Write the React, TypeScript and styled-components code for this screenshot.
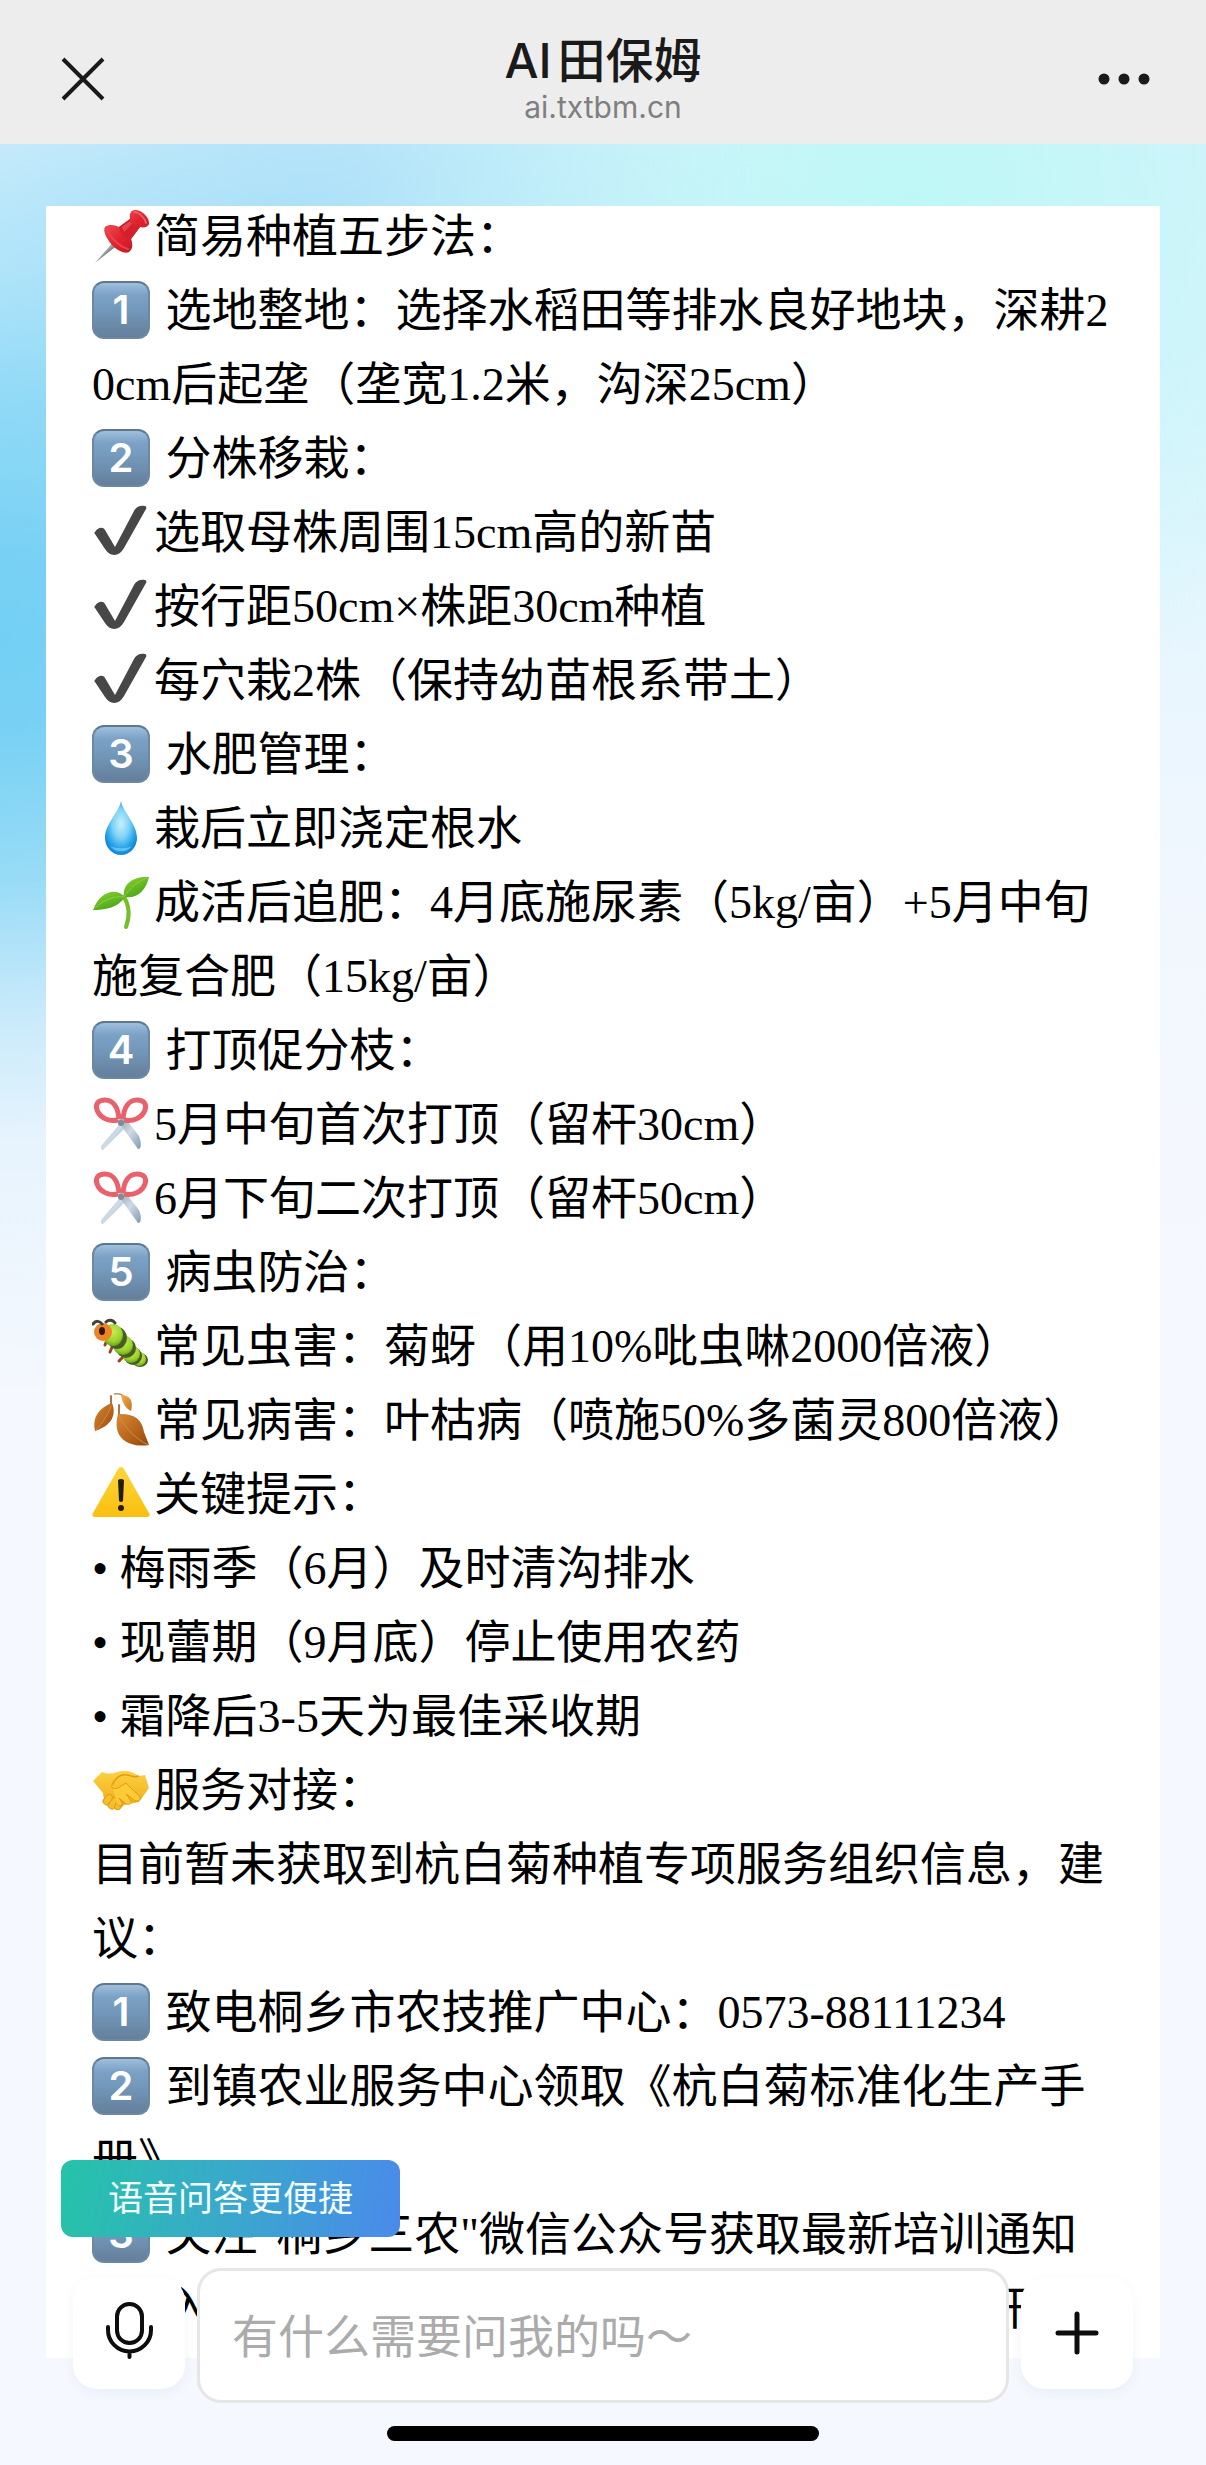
import React from "react";
import styled, { createGlobalStyle } from "styled-components";

const serif = '"Liberation Serif", "Noto Sans CJK SC", serif';
const sans = 'Inter, "Noto Sans CJK SC", sans-serif';

const GlobalStyle = createGlobalStyle`
  *, *::before, *::after { box-sizing: border-box; }
  body { margin: 0; background: #f5f8fe; }
  button { font: inherit; color: inherit; border: 0; padding: 0; cursor: pointer; }
`;

const Page = styled.div`
  display: flex;
  flex-direction: column;
  height: 100vh;
  overflow: hidden;
  color: #000;
  font-family: ${sans};
  background:
    radial-gradient(
      ellipse 1000px 760px at 0 640px,
      rgb(115 208 244) 0,
      rgb(117 208 244 / 0.97) 12%,
      rgb(117 208 244 / 0.72) 31%,
      rgb(117 208 244 / 0.34) 49%,
      rgb(117 208 244 / 0.1) 66%,
      rgb(117 208 244 / 0) 100%
    ),
    radial-gradient(ellipse 560px 520px at 910px 200px, rgb(190 248 246) 0, rgb(190 248 246 / 0) 100%),
    radial-gradient(ellipse 420px 360px at 310px 230px, rgb(178 226 248) 0, rgb(178 226 248 / 0) 100%),
    linear-gradient(180deg, #d6effd 0, #dcf4fd 420px, #eaf6fe 700px, #f2f7fe 920px, #f5f8fe 1300px);
`;

const Header = styled.header`
  display: grid;
  grid-template-columns: 1fr auto 1fr;
  align-items: center;
  flex: none;
  height: 144px;
  padding: 14px 56px 0;
  background: #ededed;
  color: #1a1a1a;
`;

const HeaderButton = styled.button<{ $end?: boolean }>`
  display: flex;
  justify-self: ${(p) => (p.$end ? "end" : "start")};
  background: none;
`;

const Heading = styled.div`
  text-align: center;
`;

const Title = styled.h1`
  margin: 0;
  font-size: 48px;
  font-weight: 500;
  line-height: 56px;
  text-autospace: normal;
`;

const Address = styled.p`
  margin: 0;
  font-size: 30px;
  line-height: 36px;
  color: #7f7f7f;
`;

const Main = styled.main`
  display: flex;
  flex: 1;
  min-height: 0;
  padding: 62px 46px 107px;
`;

const Card = styled.article`
  flex: 1;
  overflow: hidden;
  padding: 0 46px;
  background: #fff;
`;

const Answer = styled.div`
  margin-block: -6px;
  font-family: ${serif};
  font-size: 46px;
  line-height: 74px;
  word-break: break-all;
  text-spacing-trim: space-all;
  text-autospace: no-autospace;
`;

const Line = styled.p`
  margin: 0;
`;

const Keycap = styled.span`
  display: inline-block;
  overflow: hidden;
  width: 58px;
  height: 58px;
  margin: 0 4px 0 0;
  vertical-align: -13px;
  border: 2px solid #6d88a3;
  border-top-color: #5c7891;
  border-radius: 12px;
  background: linear-gradient(180deg, #9fbfdc 0, #7ba2c6 22%, #7398ba 50%, #647f9b 100%);
  color: #fff;
  font-family: ${sans};
  font-size: 40px;
  font-weight: 600;
  line-height: 54px;
  text-align: center;
`;

const Glyph = styled.svg`
  width: 58px;
  height: 58px;
  margin-right: 4px;
  vertical-align: -13px;
`;

const Tip = styled.div`
  align-self: flex-start;
  padding: 0 47px;
  border-radius: 12px;
  background: linear-gradient(100deg, #25c3a8 0, #38abc9 45%, #4a8aeb 100%);
  color: #f2feff;
  font-size: 35px;
  line-height: 77px;
`;

const Dock = styled.footer`
  position: fixed;
  inset: auto 0 0;
  display: flex;
  flex-direction: column;
  padding: 0 61px 24px;
`;

const Composer = styled.form`
  display: flex;
  align-items: center;
  gap: 12px;
  margin: 31px 12px 23px;
`;

const RoundButton = styled.button`
  display: grid;
  flex: none;
  place-items: center;
  width: 112px;
  height: 112px;
  margin-bottom: 6px;
  border-radius: 24px;
  background: #fff;
  box-shadow: 0 4px 12px rgb(60 80 140 / 0.06);
`;

const Field = styled.input`
  flex: 1;
  min-width: 0;
  height: 135px;
  padding: 0 32px;
  border: 3px solid #e6e6e6;
  border-radius: 24px;
  outline: 0;
  background: #fff;
  font-family: ${sans};
  font-size: 46px;
  color: #000;

  &::placeholder {
    color: #ababab;
    opacity: 1;
  }
`;

const HomeBar = styled.div`
  align-self: center;
  width: 432px;
  height: 15px;
  border-radius: 8px;
  background: #000;
`;

type Kind =
  | "pin" | "check" | "drop" | "sprout" | "scissors"
  | "bug" | "leaf" | "warning" | "handshake";

const drawings: Record<Kind, { label: string; art: React.ReactNode }> = {
  pin: {
    label: "图钉",
    art: (
      <>
        <defs>
          <linearGradient id="needle" x1="0" y1="0" x2="1" y2="1">
            <stop offset="0.35" stopColor="#c9d0d4" />
            <stop offset="0.6" stopColor="#6b7378" />
          </linearGradient>
          <linearGradient id="pinRed" x1="0" y1="0" x2="1" y2="1">
            <stop offset="0" stopColor="#f4616a" />
            <stop offset="0.5" stopColor="#e0242f" />
            <stop offset="1" stopColor="#b3121f" />
          </linearGradient>
        </defs>
        <path d="M23 33 27 37 3 56Z" fill="url(#needle)" />
        <path d="M13 20c4-3 10-2 14 0l11-8c-1-5 1-9 5-9 7 0 15 8 14 14-1 3-5 4-9 3l-9 12c2 5 2 10-2 13-4 2-11-1-16-6S10 24 13 20Z" fill="url(#pinRed)" />
        <path d="M27 20 38 12c1 5 5 8 10 8l-9 12c-6-1-11-6-12-12Z" fill="#d41f2c" />
        <path d="M30 20 38 14 40 17 32 25Z" fill="#ee5660" opacity=".7" />
        <path d="M42 5c5 0 11 6 12 11" fill="none" stroke="#f05c66" strokeWidth="2" strokeLinecap="round" />
        <path d="M15 22c2 7 11 17 21 20" fill="none" stroke="#ec434e" strokeWidth="2" strokeLinecap="round" />
      </>
    ),
  },
  check: {
    label: "对勾",
    art: <path d="M3 29c2-4 8-6 10-2l10 17L42 8c2-4 6-6 11-5 1 0 2 2 1 3L32 45c-5 9-14 9-19 1L3 31c-1-1-1-1 0-2Z" fill="#474747" />,
  },
  drop: {
    label: "水滴",
    art: (
      <>
        <defs>
          <radialGradient id="water" cx="0.5" cy="0.42" r="0.58">
            <stop offset="0" stopColor="#c9f0fc" />
            <stop offset="0.45" stopColor="#7ed3f6" />
            <stop offset="0.8" stopColor="#27a3ea" />
            <stop offset="1" stopColor="#1786d4" />
          </radialGradient>
        </defs>
        <path d="M29 2C31 13 45 25 45 39a16 17 0 0 1-32 0C13 25 27 13 29 2Z" fill="url(#water)" />
        <path d="M18 47c5 7 17 7 22 0-5 3-17 3-22 0Z" fill="#7fe0fb" opacity=".6" />
      </>
    ),
  },
  sprout: {
    label: "幼苗",
    art: (
      <>
        <defs>
          <linearGradient id="leafGreen" x1="0" y1="0" x2="0.6" y2="1">
            <stop offset="0" stopColor="#8bd435" />
            <stop offset="1" stopColor="#4aa317" />
          </linearGradient>
        </defs>
        <path d="M32 24c5 8 6 19 2 30" fill="none" stroke="#76bd2c" strokeWidth="4" strokeLinecap="round" />
        <path d="M33 24C24 14 8 18 1 37c11 0 25-2 32-13Z" fill="url(#leafGreen)" />
        <path d="M32 24C30 11 41 3 57 4 54 17 46 26 32 24Z" fill="url(#leafGreen)" />
        <path d="M3 35C13 26 22 23 32 24 38 15 46 8 55 5" fill="none" stroke="#8fcf3f" strokeWidth="1" />
      </>
    ),
  },
  scissors: {
    label: "剪刀",
    art: (
      <>
        <defs>
          <linearGradient id="blade" x1="0" y1="0" x2="1" y2="1">
            <stop offset="0" stopColor="#8e9daa" />
            <stop offset="0.5" stopColor="#cfdce8" />
            <stop offset="1" stopColor="#8199b0" />
          </linearGradient>
        </defs>
        <path d="M32 24 10 50c-2 3-1 5 1 5L35 31Z" fill="url(#blade)" />
        <path d="M25 25 46 54c3 1 4-6 1-13L33 23Z" fill="url(#blade)" />
        <g fill="none" stroke="#e9626b" strokeWidth="5">
          <path d="M27 24C26 12 21 5 13 5 6 5 3 9 5 15c3 8 12 12 21 10" />
          <path d="M31 24C32 12 37 5 45 5c7 0 10 4 8 10-3 8-12 12-21 10" />
        </g>
        <circle cx="29" cy="28" r="3" fill="#7e8c97" />
      </>
    ),
  },
  bug: {
    label: "毛毛虫",
    art: (
      <>
        <defs>
          <radialGradient id="bugBody" cx="0.5" cy="0.35" r="0.65">
            <stop offset="0" stopColor="#c8ec55" />
            <stop offset="0.7" stopColor="#98d22c" />
            <stop offset="1" stopColor="#6ba41b" />
          </radialGradient>
        </defs>
        <g stroke="#9a4424" strokeWidth="3" strokeLinecap="round">
          <path d="M15 23 13 28M21 28 18 35M32 39 27 44" />
        </g>
        <ellipse cx="48" cy="43" rx="8" ry="7" fill="#4a5c25" />
        <ellipse cx="47" cy="42" rx="7" ry="7" fill="url(#bugBody)" />
        <ellipse cx="41" cy="39" rx="9" ry="9" fill="#4a5c25" />
        <ellipse cx="39" cy="37" rx="9" ry="9" fill="url(#bugBody)" />
        <ellipse cx="34" cy="31" rx="10" ry="10" fill="#4a5c25" />
        <ellipse cx="31" cy="28" rx="10" ry="10" fill="url(#bugBody)" />
        <ellipse cx="25" cy="21" rx="10" ry="11" fill="#4a5c25" />
        <ellipse cx="21" cy="18" rx="10" ry="11" fill="url(#bugBody)" />
        <circle cx="11" cy="15" r="9" fill="#ee8427" />
        <ellipse cx="10" cy="14" rx="3" ry="4" fill="#30170b" />
        <path d="M1 7c3-4 7-3 9 0M14 5c3-3 7-2 9 1" fill="none" stroke="#3c4334" strokeWidth="3" strokeLinecap="round" />
      </>
    ),
  },
  leaf: {
    label: "落叶",
    art: (
      <>
        <defs>
          <linearGradient id="fallen" x1="0" y1="0" x2="1" y2="1">
            <stop offset="0" stopColor="#d98a35" />
            <stop offset="0.6" stopColor="#b4621a" />
            <stop offset="1" stopColor="#8f4710" />
          </linearGradient>
          <linearGradient id="fallenLight" x1="0" y1="0" x2="1" y2="1">
            <stop offset="0" stopColor="#efb251" />
            <stop offset="1" stopColor="#c4731f" />
          </linearGradient>
        </defs>
        <path d="M22 3c4-1 7 0 10 2" fill="none" stroke="#c98b56" strokeWidth="1.5" />
        <path d="M29 4c8 0 13 5 10 16-6-3-9-9-10-16Z" fill="url(#fallenLight)" />
        <path d="M19 5v10M27 14v12" stroke="#b27345" strokeWidth="2" strokeLinecap="round" />
        <path d="M20 12c5 12-1 23-17 28-3-14 4-23 17-28Z" fill="url(#fallen)" />
        <path d="M26 23c16-1 24 5 26 18l5 13c-18 3-38-5-31-31Z" fill="url(#fallen)" />
        <path d="M19 15C16 24 10 32 4 39M27 25c7 13 16 22 29 29" fill="none" stroke="#d48c40" strokeWidth="1" />
      </>
    ),
  },
  warning: {
    label: "警告",
    art: (
      <>
        <defs>
          <linearGradient id="caution" x1="0" y1="0" x2="0" y2="1">
            <stop offset="0" stopColor="#fbd63c" />
            <stop offset="1" stopColor="#fbbf10" />
          </linearGradient>
        </defs>
        <path d="M26 4q3-4 6 0L57 48q2 4-3 4H4q-5 0-3-4Z" fill="url(#caution)" />
        <path d="M26 15q3-2 6 0l-1 21q-2 2-4 0Z" fill="#201d12" />
        <circle cx="29" cy="43" r="3" fill="#201d12" />
      </>
    ),
  },
  handshake: {
    label: "握手",
    art: (
      <>
        <defs>
          <linearGradient id="skin" x1="0" y1="0" x2="0" y2="1">
            <stop offset="0" stopColor="#fdd142" />
            <stop offset="1" stopColor="#eda916" />
          </linearGradient>
        </defs>
        <path d="M1 20 10 11c5 2 10 2 15 0 8-2 15-1 22 4l6-1 4 13-10 14-15 3-3 3c-5 3-10 0-12-5-4-2-6-6-6-10Z" fill="url(#skin)" />
        <g fill="#f6bd2c" stroke="#e09d14" strokeWidth="1">
          <rect x="13" y="33" width="7" height="11" rx="3" transform="rotate(40 16 38)" />
          <rect x="18" y="36" width="7" height="12" rx="3" transform="rotate(35 21 42)" />
          <rect x="24" y="38" width="6" height="11" rx="3" transform="rotate(25 27 43)" />
        </g>
        <path d="M20 24c-2 4 5 5 9 1l5-3c5 6 11 10 14 14 1 4-3 5-6 3l-8-6 5 7c0 4-4 4-6 2l-6-5 3 5c0 3-3 4-5 1" fill="#fdcb38" stroke="#e09d14" strokeWidth="1" strokeLinejoin="round" />
        <path d="M20 24c3-6 8-11 15-10 5 1 8 3 12 1" fill="none" stroke="#e09d14" strokeWidth="1.5" />
      </>
    ),
  },
};

type Row = { icon?: Kind; step?: number; text: string };

const rows: Row[] = [
  { icon: "pin", text: "简易种植五步法：" },
  { step: 1, text: "选地整地：选择水稻田等排水良好地块，深耕20cm后起垄（垄宽1.2米，沟深25cm）" },
  { step: 2, text: "分株移栽：" },
  { icon: "check", text: "选取母株周围15cm高的新苗" },
  { icon: "check", text: "按行距50cm×株距30cm种植" },
  { icon: "check", text: "每穴栽2株（保持幼苗根系带土）" },
  { step: 3, text: "水肥管理：" },
  { icon: "drop", text: "栽后立即浇定根水" },
  { icon: "sprout", text: "成活后追肥：4月底施尿素（5kg/亩）+5月中旬施复合肥（15kg/亩）" },
  { step: 4, text: "打顶促分枝：" },
  { icon: "scissors", text: "5月中旬首次打顶（留杆30cm）" },
  { icon: "scissors", text: "6月下旬二次打顶（留杆50cm）" },
  { step: 5, text: "病虫防治：" },
  { icon: "bug", text: "常见虫害：菊蚜（用10%吡虫啉2000倍液）" },
  { icon: "leaf", text: "常见病害：叶枯病（喷施50%多菌灵800倍液）" },
  { icon: "warning", text: "关键提示：" },
  { text: "• 梅雨季（6月）及时清沟排水" },
  { text: "• 现蕾期（9月底）停止使用农药" },
  { text: "• 霜降后3-5天为最佳采收期" },
  { icon: "handshake", text: "服务对接：" },
  { text: "目前暂未获取到杭白菊种植专项服务组织信息，建议：" },
  { step: 1, text: "致电桐乡市农技推广中心：0573-88111234" },
  { step: 2, text: "到镇农业服务中心领取《杭白菊标准化生产手册》" },
  { step: 3, text: '关注"桐乡三农"微信公众号获取最新培训通知' },
  { step: 4, text: "入驻农技线上直播间每周三上午9:00准时开课" },
];

function Emoji({ kind }: { kind: Kind }) {
  const { label, art } = drawings[kind];
  return (
    <Glyph viewBox="0 0 58 58" role="img" aria-label={label}>
      {art}
    </Glyph>
  );
}

export default function App() {
  return (
    <Page lang="zh-CN">
      <GlobalStyle />
      <Header>
        <HeaderButton type="button" aria-label="关闭">
          <svg width="52" height="52" viewBox="0 0 52 52" fill="none" stroke="currentColor" strokeWidth="4">
            <path d="M7 6 47 46M47 6 7 46" />
          </svg>
        </HeaderButton>
        <Heading>
          <Title>AI田保姆</Title>
          <Address>ai.txtbm.cn</Address>
        </Heading>
        <HeaderButton type="button" aria-label="更多" $end>
          <svg width="52" height="52" viewBox="0 0 52 52" fill="currentColor">
            <circle cx="6" cy="26" r="5.5" />
            <circle cx="26" cy="26" r="5.5" />
            <circle cx="46" cy="26" r="5.5" />
          </svg>
        </HeaderButton>
      </Header>

      <Main>
        <Card>
          <Answer>
            {rows.map((row, i) => (
              <Line key={i}>
                {row.icon && <Emoji kind={row.icon} />}
                {row.step && <><Keycap>{row.step}</Keycap>{" "}</>}
                {row.text}
              </Line>
            ))}
          </Answer>
        </Card>
      </Main>

      <Dock>
        <Tip>语音问答更便捷</Tip>
        <Composer onSubmit={(e) => e.preventDefault()}>
          <RoundButton type="button" aria-label="语音输入">
            <svg width="52" height="64" viewBox="0 0 52 64" fill="none" stroke="#0d0d0d" strokeWidth="4" strokeLinecap="round">
              <rect x="14" y="3" width="25" height="39" rx="12.5" />
              <path d="M5 26v3a21.5 21.5 0 0 0 43 0v-3M26.500 51v5" />
            </svg>
          </RoundButton>
          <Field type="text" aria-label="提问" placeholder="有什么需要问我的吗～" />
          <RoundButton type="button" aria-label="添加">
            <svg width="46" height="46" viewBox="0 0 46 46" fill="none" stroke="#0d0d0d" strokeWidth="5" strokeLinecap="round">
              <path d="M23 4v38M4 23h38" />
            </svg>
          </RoundButton>
        </Composer>
        <HomeBar />
      </Dock>
    </Page>
  );
}
